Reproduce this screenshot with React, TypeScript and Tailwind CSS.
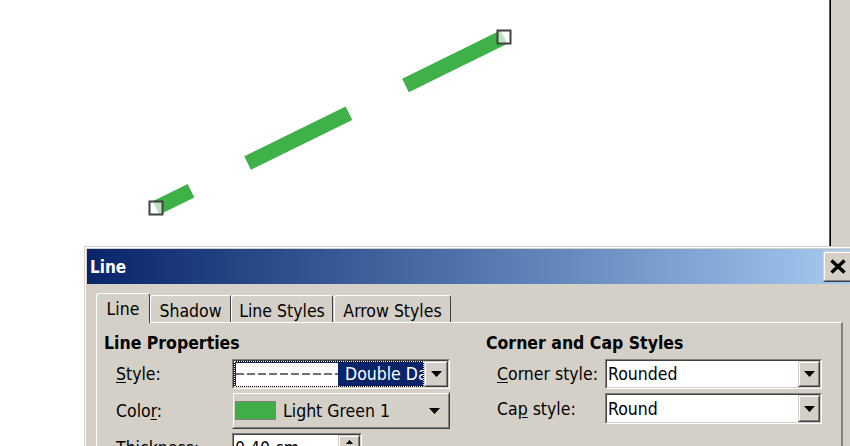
import React from 'react';

const Sunken = ({ className = '', children }: { className?: string; children: React.ReactNode }) => (
  <div className={`border border-t-[#808080] border-l-[#808080] border-r-white border-b-white ${className}`}>
    <div className="h-full border border-t-[#404040] border-l-[#404040] border-r-[#d4d0c8] border-b-[#d4d0c8] flex">
      {children}
    </div>
  </div>
);

const Raised = ({ className = '', children }: { className?: string; children: React.ReactNode }) => (
  <div className={`bg-[#d4d0c8] border border-t-[#d4d0c8] border-l-[#d4d0c8] border-r-[#404040] border-b-[#404040] ${className}`}>
    <div className="h-full border border-t-white border-l-white border-r-[#808080] border-b-[#808080] flex items-center justify-center">
      {children}
    </div>
  </div>
);

const Arrow = () => (
  <svg width="11" height="6" viewBox="0 0 11 6">
    <polygon points="0,0 11,0 5.5,6" fill="#000" />
  </svg>
);

const DropButton = ({ w = 'w-[22px]' }: { w?: string }) => (
  <Raised className={`${w} h-full shrink-0`}>
    <Arrow />
  </Raised>
);

const Canvas = () => (
  <svg width="829" height="246" className="block">
    <line
      x1="156"
      y1="208"
      x2="504"
      y2="37"
      stroke="#40b049"
      strokeWidth="15"
      strokeDasharray="113 63"
      strokeDashoffset="74"
      strokeLinecap="butt"
    />
    <rect x="149.5" y="201.5" width="13" height="13" fill="white" fillOpacity="0.65" stroke="#404040" strokeWidth="2" />
    <rect x="497.5" y="30.5" width="13" height="13" fill="white" fillOpacity="0.65" stroke="#404040" strokeWidth="2" />
  </svg>
);

const tabs = [
  { label: 'Line', w: 'w-[54px]', active: true },
  { label: 'Shadow', w: 'w-[81px]' },
  { label: 'Line Styles', w: 'w-[102px]' },
  { label: 'Arrow Styles', w: 'w-[117px] ml-[1px]' },
];

export default function App() {
  return (
    <div className="relative w-[850px] h-[446px] overflow-hidden bg-white text-black font-['DejaVu_Sans_Condensed','DejaVu_Sans',sans-serif] text-[17.5px] leading-[22px]">
      {/* document area */}
      <div className="flex h-[246px]">
        <div className="w-[829px] bg-white">
          <Canvas />
        </div>
        <div className="w-[1px] bg-[#555]" />
        <div className="w-[1px] bg-black" />
        <div className="flex-1 bg-[#d4d0c8]" />
      </div>

      {/* floating dialog */}
      <div className="absolute left-[84px] top-[246px] w-[780px] h-[210px] border-t border-l border-[#d4d0c8]">
        <div className="h-full border-t border-l border-white">
          <div className="h-full border-t border-l border-[#d4d0c8] bg-[#d4d0c8]">
            {/* title bar */}
            <div className="h-[35px] w-[767px] flex items-center justify-between bg-gradient-to-r from-[#0a246a] to-[#a6caf0]">
              <span className="pl-[3px] text-white font-bold text-[17px]">Line</span>
              <Raised className="w-[29px] h-[31px] mr-[2px]">
                <svg width="16" height="15" viewBox="0 0 16 15">
                  <path d="M1.5 1.5 L14.5 13.5 M14.5 1.5 L1.5 13.5" stroke="#000" strokeWidth="3.4" />
                </svg>
              </Raised>
            </div>

            {/* tabs */}
            <div className="pl-[9px] pt-[9px]">
              <div className="flex items-end h-[29px]">
                {tabs.map((t) =>
                  t.active ? (
                    <div
                      key={t.label}
                      className={`${t.w} relative z-10 h-[30px] -mb-[1px] bg-[#d4d0c8] border-t border-l border-white border-r border-r-[#404040] rounded-t-[3px] flex items-center justify-center`}
                    >
                      {t.label}
                    </div>
                  ) : (
                    <div
                      key={t.label}
                      className={`${t.w} h-[27px] border-t border-l border-white border-r border-r-[#404040] rounded-t-[3px] flex items-center justify-center pt-[3px]`}
                    >
                      {t.label}
                    </div>
                  )
                )}
              </div>

              {/* panel */}
              <div className="w-[747px] h-[140px] border-t border-l border-white border-r-2 border-r-[#808080] pt-[9px] pl-[7px] flex">
                {/* left column */}
                <div className="w-[382px] flex flex-col">
                  <div className="font-bold h-[22px]">Line Properties</div>
                  <div className="mt-[5px] flex flex-col gap-[3px] pl-[12px]">
                    <div className="flex items-center h-[30px]">
                      <div className="w-[116px]">
                        <u className="underline-offset-2">S</u>tyle:
                      </div>
                      <Sunken className="w-[218px] h-[30px]">
                        <div className="flex-1 min-w-0 flex">
                          <div className="flex-1 min-w-0 bg-black border border-dotted border-white">
                            <div className="h-full bg-[#0a246a] flex items-center overflow-hidden">
                              <div className="w-[102px] h-[23px] ml-[1px] bg-white shrink-0 flex items-center">
                                <svg width="102" height="4">
                                  <line x1="0" y1="2" x2="102" y2="2" stroke="#707070" strokeWidth="2" strokeDasharray="8 3" />
                                </svg>
                              </div>
                              <span className="ml-[7px] text-white whitespace-nowrap">Double Dash</span>
                            </div>
                          </div>
                        </div>
                        <DropButton w="w-[24px]" />
                      </Sunken>
                    </div>

                    <div className="flex items-center h-[37px]">
                      <div className="w-[116px]">
                        Colo<u className="underline-offset-2">r</u>:
                      </div>
                      <Raised className="w-[218px] h-[37px]">
                        <div className="w-full flex items-center pl-[1px] pr-[8px]">
                          <div className="w-[41px] h-[19px] bg-[#3fae48] border border-[#808080]" />
                          <span className="ml-[7px] flex-1">Light Green 1</span>
                          <Arrow />
                        </div>
                      </Raised>
                    </div>

                    <div className="flex items-center h-[30px] mt-[1px]">
                      <div className="w-[116px]">
                        <u className="underline-offset-2">T</u>hickness:
                      </div>
                      <Sunken className="w-[130px] h-[30px]">
                        <div className="flex-1 bg-white pl-[1px] flex items-center">0.40 cm</div>
                        <div className="w-[22px] flex flex-col">
                          <Raised className="h-[13px]">
                            <svg width="7" height="4" viewBox="0 0 7 4">
                              <polygon points="3.5,0 7,4 0,4" fill="#000" />
                            </svg>
                          </Raised>
                          <Raised className="h-[13px]">
                            <svg width="7" height="4" viewBox="0 0 7 4">
                              <polygon points="0,0 7,0 3.5,4" fill="#000" />
                            </svg>
                          </Raised>
                        </div>
                      </Sunken>
                    </div>
                  </div>
                </div>

                {/* right column */}
                <div className="flex flex-col">
                  <div className="font-bold h-[22px]">Corner and Cap Styles</div>
                  <div className="mt-[5px] flex flex-col gap-[4px] pl-[11px]">
                    <div className="flex items-center h-[30px]">
                      <div className="w-[108px]">
                        <u className="underline-offset-2">C</u>orner style:
                      </div>
                      <Sunken className="w-[217px] h-[30px]">
                        <div className="flex-1 bg-white pl-[1px] flex items-center">Rounded</div>
                        <DropButton />
                      </Sunken>
                    </div>
                    <div className="flex items-center h-[31px]">
                      <div className="w-[108px]">
                        Ca<u className="underline-offset-2">p</u> style:
                      </div>
                      <Sunken className="w-[217px] h-[31px]">
                        <div className="flex-1 bg-white pl-[1px] flex items-center">Round</div>
                        <DropButton />
                      </Sunken>
                    </div>
                  </div>
                </div>
              </div>
            </div>
          </div>
        </div>
      </div>
    </div>
  );
}
